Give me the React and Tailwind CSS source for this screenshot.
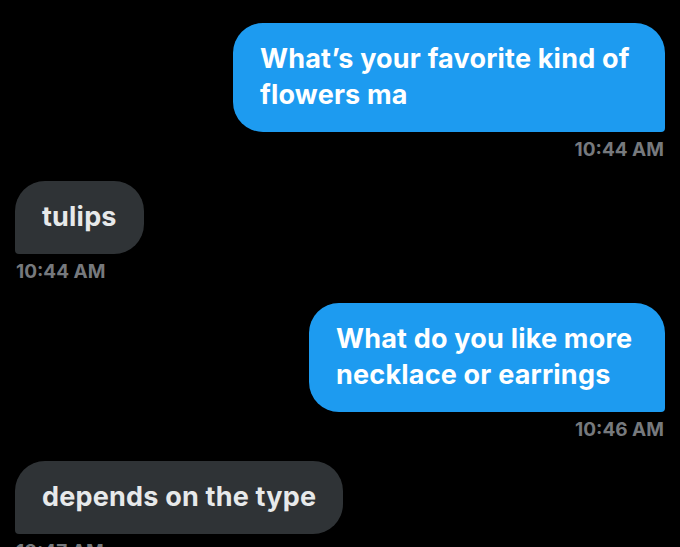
// App.jsx – chat thread screenshot

import React from "react";

const messages = [
  { id: 1, mine: true, lines: ["What’s your favorite kind of", "flowers ma"], time: "10:44 AM", w: "w-[432px]" },
  { id: 2, mine: false, lines: ["tulips"], time: "10:44 AM" },
  { id: 3, mine: true, lines: ["What do you like more", "necklace or earrings"], time: "10:46 AM", w: "w-[356px]" },
  { id: 4, mine: false, lines: ["depends on the type"], time: "10:47 AM" },
];

export default function App() {
  return (
    <div
      className="min-h-screen bg-black px-[15px] pt-[23px] overflow-hidden"
      style={{ fontFamily: "Inter, 'Liberation Sans', sans-serif" }}
    >
      <div className="flex flex-col">
        {messages.map((m) => (
          <div
            key={m.id}
            className={"flex flex-col mb-[19px] " + (m.mine ? "items-end" : "items-start")}
          >
            <div
              className={
                m.mine
                  ? "bg-[#1d9bf0] text-white rounded-[30px] rounded-br-[4px] px-[27px] pt-[18px] pb-[19px] " + m.w
                  : "bg-[#2f3336] text-[#e7e9ea] rounded-[30px] rounded-bl-[4px] px-[27px] pt-[18px] pb-[19px]"
              }
            >
              {m.lines.map((l, i) => (
                <div key={i} className="text-[27px] leading-[36px] font-bold tracking-[0.2px] whitespace-nowrap">
                  {l}
                </div>
              ))}
            </div>
            <div className="mt-[6px] text-[19px] leading-[24px] font-bold text-[#76797d] px-[1px]">
              {m.time}
            </div>
          </div>
        ))}
      </div>
    </div>
  );
}
